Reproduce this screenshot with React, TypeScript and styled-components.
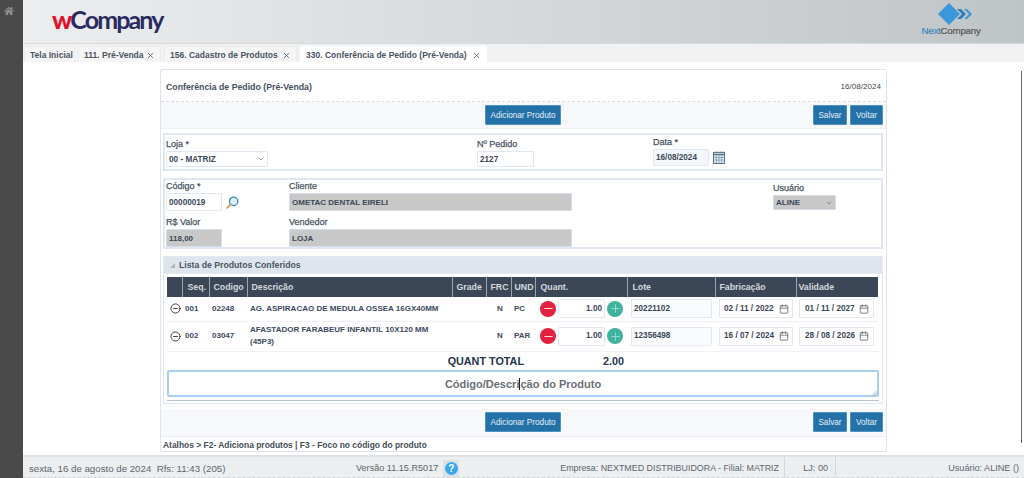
import React from 'react';
import styled, {createGlobalStyle} from 'styled-components';
import {FaHome} from 'react-icons/fa';
import {Calendar, ChevronDown, CircleMinus, Minus, Plus, X} from 'lucide-react';

const GlobalStyle = createGlobalStyle`
    html, body, #root {
        margin: 0;
        height: 100%;
        overflow: hidden;
    }
    body {
        font-family: "Liberation Sans", Arial, sans-serif;
        color: #3d4a5c;
        background: #fff;
    }
    * {
        box-sizing: border-box;
    }
`;

const Shell = styled.div`
    display: grid;
    grid-template-columns: 23px 1fr;
    height: 478px;
`;
const Sidebar = styled.aside`
    background: #4a4a4a;
    color: #8f8f8f;
    padding: 6px 0 0 4px;
    font-size: 10px;
`;
const Column = styled.div`
    display: flex;
    flex-direction: column;
    min-width: 0;
`;
const Header = styled.header`
    height: 44px;
    flex: none;
    display: flex;
    justify-content: space-between;
    background: linear-gradient(90deg, #eceef0 0%, #dcdfe1 35%, #bfc4c7 100%);
    border-bottom: 1px solid #d6dadd;
`;
const Brand = styled.div`
    margin: 4px 0 0 29px;
    font-family: Lato, sans-serif;
    font-size: 25px;
    line-height: 30px;
    font-weight: 700;
    letter-spacing: -1.9px;
    color: #2a2a63;
    b {
        color: #e2122c;
        font-weight: 900;
    }
`;
const Partner = styled.div`
    width: 60px;
    margin: 3px 43px 0 0;
    display: flex;
    flex-direction: column;
    align-items: center;
    font-size: 9.7px;
    line-height: 11px;
    letter-spacing: -0.2px;
    -webkit-text-stroke: 0.2px currentColor;
    color: #555;
    white-space: nowrap;
    svg {
        margin-left: 9px;
    }
    span span {
        color: #3d86bd;
    }
`;
const TabBar = styled.nav`
    height: 18px;
    flex: none;
    display: flex;
    gap: 3px;
    padding: 2px 0 0 1px;
    background: #f1f1f1;
`;
const Tab = styled.div<{$active?: boolean; $width: number}>`
    width: ${p => p.$width}px;
    display: flex;
    align-items: center;
    justify-content: space-between;
    padding: 1px 5px 0 5px;
    font-size: 8.5px;
    font-weight: 700;
    color: #4a5463;
    white-space: nowrap;
    background: ${p => (p.$active ? '#fff' : '#f5f5f5')};
    border: 1px solid ${p => (p.$active ? '#fff' : '#ececec')};
    border-bottom: 0;
    border-radius: 2px 2px 0 0;
    svg {
        flex: none;
    }
`;
const Main = styled.main`
    position: relative;
    flex: 1;
    min-height: 0;
    padding-top: 7px;
    overflow: hidden;
`;
const ScrollLine = styled.div`
    position: absolute;
    top: 9px;
    right: 2px;
    width: 1px;
    height: 372px;
    background: #666;
`;
const Panel = styled.section`
    width: 727px;
    height: 383px;
    margin: 0 auto;
    border: 1px solid #dbe4f0;
    border-radius: 2px;
    display: flex;
    flex-direction: column;
`;
const TitleRow = styled.div`
    height: 32px;
    flex: none;
    display: flex;
    align-items: center;
    justify-content: space-between;
    padding: 2px 5px 0 5px;
    border-bottom: 1px dashed #d8dde3;
`;
const Title = styled.h1`
    margin: 0;
    font-size: 8.75px;
    font-weight: 700;
    color: #46525f;
`;
const DateText = styled.span`
    font-size: 8.1px;
    color: #444;
`;
const Toolbar = styled.div<{$height: number}>`
    height: ${p => p.$height}px;
    flex: none;
    display: grid;
    grid-template-columns: 1fr auto 1fr;
    align-items: start;
    padding: 3px 3px 0 2px;
    background: #f7f8fb;
    border-bottom: 1px solid #ebeff5;
`;
const ToolbarEnd = styled.div`
    display: flex;
    justify-content: flex-end;
    gap: 3px;
`;
const Button = styled.button<{$width: number}>`
    width: ${p => p.$width}px;
    height: 20px;
    padding: 0;
    border: 1px solid #4b93c6;
    border-radius: 1px;
    background: #2471a8;
    color: #e6eff6;
    font-family: inherit;
    font-size: 8.2px;
`;
const Forms = styled.div`
    flex: 1;
    padding: 4px 3px 0 2px;
    display: flex;
    flex-direction: column;
`;
const Section = styled.div<{$columns: string; $height: number; $top: number}>`
    height: ${p => p.$height}px;
    flex: none;
    margin-bottom: 7px;
    border: 2px solid #dfe7f2;
    padding: ${p => p.$top}px 1px 0;
    display: grid;
    grid-template-columns: ${p => p.$columns};
    row-gap: 6px;
    align-content: start;
`;
const Field = styled.div<{$row?: number; $shift?: number}>`
    display: flex;
    flex-direction: column;
    grid-row: ${p => p.$row ?? 'auto'};
    margin-top: ${p => p.$shift ?? 0}px;
`;
const Label = styled.label`
    height: 11px;
    font-size: 9px;
    line-height: 11px;
    -webkit-text-stroke: 0.25px #4a5563;
    color: #4a5563;
    margin-bottom: 1px;
`;
const Box = styled.div<{$width: number; $height?: number; $readonly?: boolean; $focus?: boolean; $end?: boolean; $inset?: number; $tint?: boolean}>`
    width: ${p => p.$width}px;
    height: ${p => p.$height ?? 18}px;
    display: flex;
    align-items: center;
    justify-content: ${p => (p.$end ? 'flex-end' : 'space-between')};
    padding: 0 ${p => (p.$inset ? p.$inset - 1 : 2)}px 0 ${p => p.$inset ?? 2}px;
    border: 1px solid ${p => (p.$readonly ? '#d5dde8' : '#e0e8f2')};
    border-radius: 1px;
    background: ${p => (p.$readonly ? '#c8c8c8' : p.$focus ? '#f3f7fc' : p.$tint ? '#fafbfd' : '#fff')};
    color: #3b4757;
    font-size: ${p => (p.$readonly ? 8 : 8.2)}px;
    font-weight: 700;
    white-space: nowrap;
    svg {
        flex: none;
        color: #666;
    }
`;
const InlineField = styled.div`
    display: flex;
    align-items: center;
    gap: 4px;
`;
const SectionHead = styled.div`
    height: 18px;
    flex: none;
    display: flex;
    align-items: center;
    gap: 4px;
    padding-left: 6px;
    background: #dfe5ed;
    border: 1px solid #e4e9f0;
    font-size: 8.7px;
    font-weight: 700;
    color: #4a5563;
    i {
        width: 0;
        height: 0;
        border-left: 5px solid transparent;
        border-bottom: 5px solid #b0b5bb;
    }
`;
const ListBody = styled.div`
    border: 1px solid #dfe7f2;
    border-top: 0;
    padding: 3px 3px 2px;
    flex: none;
`;
const ListInner = styled.div`
    padding-bottom: 3px;
    border-bottom: 1px solid #b9c2cd;
`;
const Table = styled.table`
    width: 711px;
    table-layout: fixed;
    border-collapse: collapse;
    font-size: 8px;
    font-weight: 700;
    color: #3c4a60;
`;
const Th = styled.th<{$pad?: number}>`
    height: 20px;
    padding: 0 0 0 ${p => p.$pad ?? 4}px;
    background: #3b4757;
    color: #d3d8de;
    font-size: 8.75px;
    font-weight: 700;
    text-align: left;
    border-left: 1px solid #9aa3ae;
    &:first-child {
        border-left: 0;
    }
`;
const Row = styled.tr<{$height: number}>`
    height: ${p => p.$height}px;
`;
const Td = styled.td<{$center?: boolean; $pad?: number}>`
    padding: 0 0 0 ${p => p.$pad ?? 3}px;
    text-align: ${p => (p.$center ? 'center' : 'left')};
    border-bottom: 1px solid #eef0f3;
    line-height: 12px;
    svg {
        display: block;
    }
`;
const TotalCell = styled.td<{$pad: number}>`
    height: 19px;
    padding: 0 ${p => p.$pad}px 0 0;
    text-align: right;
    font-size: 10.8px;
    font-weight: 700;
    color: #27344d;
`;
const Stepper = styled.div`
    display: flex;
    align-items: center;
    gap: 2px;
`;
const Round = styled.span<{$color: string; $mark: string}>`
    width: 16px;
    height: 16px;
    flex: none;
    display: flex;
    align-items: center;
    justify-content: center;
    border-radius: 50%;
    background: ${p => p.$color};
    color: ${p => p.$mark};
`;
const SearchBox = styled.div`
    position: relative;
    height: 27px;
    display: flex;
    align-items: center;
    justify-content: center;
    border: 2px solid #a9cdec;
    border-radius: 2px;
    background: #fff;
    color: #6a6f75;
    font-size: 11px;
    font-weight: 700;
    &::after {
        content: '';
        position: absolute;
        right: 0;
        bottom: 0;
        border-left: 5px solid transparent;
        border-bottom: 5px solid #d5dbe2;
    }
`;
const Caret = styled.i`
    display: inline-block;
    width: 0;
    height: 12px;
    vertical-align: -2px;
    border-left: 1px solid #222;
`;
const Shortcuts = styled.div`
    height: 14px;
    flex: none;
    display: flex;
    align-items: center;
    padding: 1px 0 0 2px;
    font-size: 8.45px;
    font-weight: 700;
    color: #444c57;
`;
const StatusBar = styled.footer`
    height: 23px;
    flex: none;
    display: flex;
    align-items: stretch;
    background: #eceeef;
    border-top: 2px solid #dfe1e3;
    border-bottom: 1px dashed #d2d5d8;
    font-size: 9.1px;
    color: #5d6670;
    white-space: nowrap;
`;
const StatusDate = styled.div`
    width: 333px;
    padding: 6px 0 0 6px;
    font-size: 9.7px;
`;
const StatusVersion = styled.div`
    display: flex;
    align-items: flex-start;
    gap: 5px;
    padding-top: 6px;
`;
const HelpWrap = styled.span`
    width: 16px;
    height: 17px;
    margin-top: -3px;
    display: flex;
    align-items: center;
    justify-content: center;
    background: #dfe2e4;
`;
const Help = styled.span`
    width: 13px;
    height: 13px;
    border-radius: 50%;
    background: #3aa9ec;
    color: #fff;
    font-size: 10px;
    font-weight: 700;
    line-height: 13px;
    text-align: center;
`;
const StatusCell = styled.div<{$width?: number; $size?: number}>`
    ${p => (p.$width ? `width: ${p.$width}px; flex: none;` : 'flex: 1;')}
    padding: 6px ${p => (p.$width === 51 ? 7 : 5)}px 0 0;
    font-size: ${p => p.$size ?? 9.1}px;
    text-align: right;
    border-right: 1px solid #d4d6d8;
    &:last-child {
        border-right: 0;
    }
`;

const SearchIcon = () => (
    <svg width="13" height="13" viewBox="0 0 13 13">
        <circle cx="7.6" cy="5.4" r="4.2" fill="#dceefa" stroke="#3c87bd" strokeWidth="1.3"/>
        <path d="M4.6 8.4 1.2 11.8" stroke="#c9a56a" strokeWidth="2" strokeLinecap="round"/>
    </svg>
);

const CalendarIcon = () => (
    <svg width="12" height="13" viewBox="0 0 12 13">
        <rect x="0.5" y="1.5" width="11" height="11" fill="#e4eaf0" stroke="#5d7488"/>
        <path d="M0.5 3.5h11" stroke="#5d7488" strokeWidth="1.4"/>
        <path d="M2.5 0v2.5M5 0v2.5M7.5 0v2.5M10 0v2.5M3.3 4v8M6 4v8M8.7 4v8M1 6.5h10M1 9h10" stroke="#7d92a4" strokeWidth="0.7"/>
    </svg>
);

const PartnerMark = () => (
    <svg width="35" height="22" viewBox="0 0 35 22">
        <path d="M11 0 22 11 11 22 0 11Z" fill="#3a97dc"/>
        <path d="M19 6h4l5 5-5 5h-4l5-5Z" fill="#2f7db8"/>
        <path d="M26 6h3l5 5-5 5h-3l5-5Z" fill="#3a97dc"/>
    </svg>
);

const columns = [15, 27, 38, 205, 34, 25, 24, 92, 88, 81, 82];

const products = [
    {seq: '001', code: '02248', name: 'AG. ASPIRACAO DE MEDULA OSSEA 16GX40MM', und: 'PC', lot: '20221102', made: '02 / 11 / 2022', valid: '01 / 11 / 2027', height: 24},
    {seq: '002', code: '03047', name: 'AFASTADOR FARABEUF INFANTIL 10X120 MM (45P3)', und: 'PAR', lot: '12356498', made: '16 / 07 / 2024', valid: '28 / 08 / 2026', height: 30},
];

const Actions = () => (
    <>
        <span/>
        <Button $width={76}>Adicionar Produto</Button>
        <ToolbarEnd>
            <Button $width={34}>Salvar</Button>
            <Button $width={33}>Voltar</Button>
        </ToolbarEnd>
    </>
);

const App: React.FunctionComponent = () => {
    return (
        <Shell>
            <GlobalStyle/>
            <Sidebar><FaHome/></Sidebar>
            <Column>
                <Header>
                    <Brand><b>w</b>Company</Brand>
                    <Partner>
                        <PartnerMark/>
                        <span><span>Next</span>Company</span>
                    </Partner>
                </Header>
                <TabBar>
                    <Tab $width={51}>Tela Inicial</Tab>
                    <Tab $width={83}>111. Pré-Venda <X size={9} strokeWidth={2}/></Tab>
                    <Tab $width={133}>156. Cadastro de Produtos <X size={9} strokeWidth={2}/></Tab>
                    <Tab $width={187} $active>330. Conferência de Pedido (Pré-Venda) <X size={9} strokeWidth={2}/></Tab>
                </TabBar>
                <Main>
                    <ScrollLine/>
                    <Panel>
                        <TitleRow>
                            <Title>Conferência de Pedido (Pré-Venda)</Title>
                            <DateText>16/08/2024</DateText>
                        </TitleRow>
                        <Toolbar $height={27}><Actions/></Toolbar>
                        <Forms>
                            <Section $columns="311px 176px 1fr" $height={38} $top={4}>
                                <Field>
                                    <Label>Loja *</Label>
                                    <Box $width={102} $height={16}>00 - MATRIZ <ChevronDown size={8}/></Box>
                                </Field>
                                <Field>
                                    <Label>Nº Pedido</Label>
                                    <Box $width={57} $height={16}>2127</Box>
                                </Field>
                                <Field $shift={-2}>
                                    <Label>Data *</Label>
                                    <InlineField>
                                        <Box $width={56} $height={17} $focus>16/08/2024</Box>
                                        <CalendarIcon/>
                                    </InlineField>
                                </Field>
                            </Section>
                            <Section $columns="123px 484px 1fr" $height={71} $top={1}>
                                <Field>
                                    <Label>Código *</Label>
                                    <InlineField>
                                        <Box $width={56}>00000019</Box>
                                        <SearchIcon/>
                                    </InlineField>
                                </Field>
                                <Field>
                                    <Label>Cliente</Label>
                                    <Box $width={283} $readonly>OMETAC DENTAL EIRELI</Box>
                                </Field>
                                <Field $shift={2}>
                                    <Label>Usuário</Label>
                                    <Box $width={63} $height={15} $readonly>ALINE <ChevronDown size={8}/></Box>
                                </Field>
                                <Field $row={2}>
                                    <Label>R$ Valor</Label>
                                    <Box $width={56} $readonly>118,00</Box>
                                </Field>
                                <Field $row={2}>
                                    <Label>Vendedor</Label>
                                    <Box $width={283} $readonly>LOJA</Box>
                                </Field>
                            </Section>
                            <SectionHead><i/>Lista de Produtos Conferidos</SectionHead>
                            <ListBody>
                                <ListInner>
                                    <Table>
                                        <colgroup>
                                            {columns.map((width, index) => <col key={index} style={{width}}/>)}
                                        </colgroup>
                                        <thead>
                                            <tr>
                                                <Th/>
                                                <Th $pad={5}>Seq.</Th>
                                                <Th>Codigo</Th>
                                                <Th>Descrição</Th>
                                                <Th>Grade</Th>
                                                <Th>FRC</Th>
                                                <Th $pad={3}>UND</Th>
                                                <Th $pad={5}>Quant.</Th>
                                                <Th $pad={5}>Lote</Th>
                                                <Th $pad={4}>Fabricação</Th>
                                                <Th $pad={2}>Validade</Th>
                                            </tr>
                                        </thead>
                                        <tbody>
                                            {products.map(item => (
                                                <Row key={item.seq} $height={item.height}>
                                                    <Td><CircleMinus size={11} strokeWidth={2} color="#333"/></Td>
                                                    <Td>{item.seq}</Td>
                                                    <Td>{item.code}</Td>
                                                    <Td>{item.name}</Td>
                                                    <Td/>
                                                    <Td $center>N</Td>
                                                    <Td>{item.und}</Td>
                                                    <Td $pad={5}>
                                                        <Stepper>
                                                            <Round $color="#e2203f" $mark="#fff"><Minus size={13} strokeWidth={1.5}/></Round>
                                                            <Box $width={47} $height={19} $end>1.00</Box>
                                                            <Round $color="#3fb39d" $mark="#a8e0d5"><Plus size={13} strokeWidth={1.5}/></Round>
                                                        </Stepper>
                                                    </Td>
                                                    <Td $pad={4}><Box $width={81} $height={19} $tint>{item.lot}</Box></Td>
                                                    <Td $pad={4}>
                                                        <Box $width={74} $height={19} $inset={4}>{item.made} <Calendar size={10}/></Box>
                                                    </Td>
                                                    <Td>
                                                        <Box $width={75} $height={19} $inset={5}>{item.valid} <Calendar size={10}/></Box>
                                                    </Td>
                                                </Row>
                                            ))}
                                            <tr>
                                                <TotalCell colSpan={7} $pad={11}>QUANT TOTAL</TotalCell>
                                                <TotalCell $pad={3}>2.00</TotalCell>
                                                <TotalCell colSpan={3} $pad={0}/>
                                            </tr>
                                        </tbody>
                                    </Table>
                                    <SearchBox><span>Código/Descri<Caret/>ção do Produto</span></SearchBox>
                                </ListInner>
                            </ListBody>
                        </Forms>
                        <Toolbar $height={28}><Actions/></Toolbar>
                        <Shortcuts>Atalhos &gt; F2- Adiciona produtos | F3 - Foco no código do produto</Shortcuts>
                    </Panel>
                </Main>
                <StatusBar>
                    <StatusDate>sexta, 16 de agosto de 2024&nbsp; Rfs: 11:43 (205)</StatusDate>
                    <StatusVersion>Versão 11.15.R5017 <HelpWrap><Help>?</Help></HelpWrap></StatusVersion>
                    <StatusCell $size={8.9}>Empresa: NEXTMED DISTRIBUIDORA - Filial: MATRIZ</StatusCell>
                    <StatusCell $width={51}>LJ: 00</StatusCell>
                    <StatusCell $width={188}>Usuário: ALINE ()</StatusCell>
                </StatusBar>
            </Column>
        </Shell>
    );
};

export default App;
